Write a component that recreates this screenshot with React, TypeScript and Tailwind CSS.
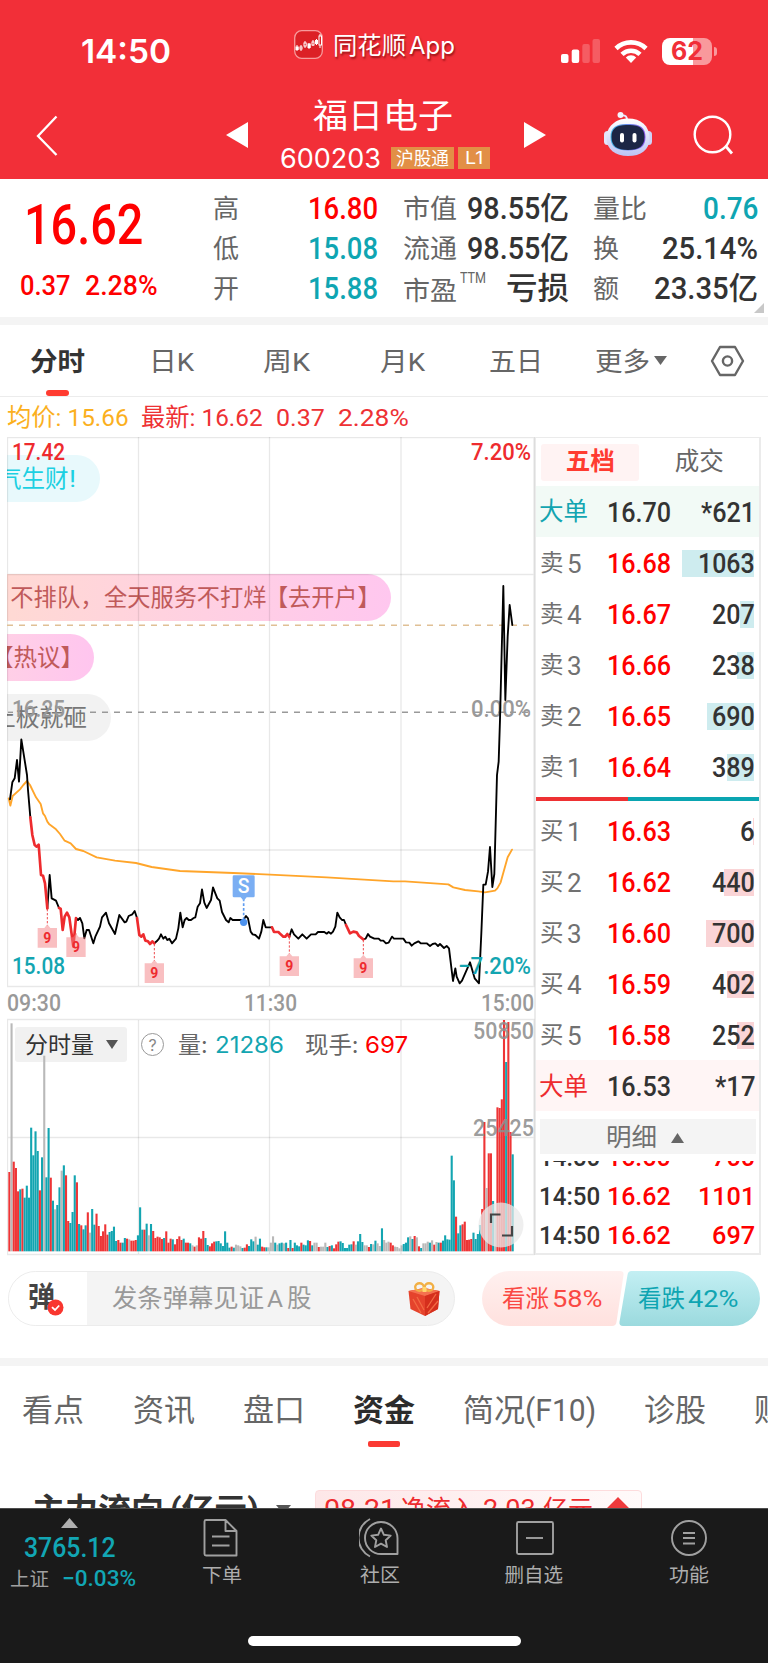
import React, { useLayoutEffect, useRef, useState } from 'react';

type FitProps = { w: number; className?: string; children: React.ReactNode };

/** Text condensed or widened horizontally to an exact advance width. */
function Fit({ w, className = '', children }: FitProps) {
  const ref = useRef<HTMLSpanElement>(null);
  const [scale, setScale] = useState(1);
  useLayoutEffect(() => {
    if (ref.current) setScale(w / ref.current.offsetWidth);
  }, [w, children]);
  return (
    <span className={`block shrink-0 whitespace-pre ${className}`} style={{ width: w }}>
      <span ref={ref} className="inline-block origin-left" style={{ transform: `scaleX(${scale})` }}>
        {children}
      </span>
    </span>
  );
}

const VOLUME =
  'r486 g40 r455 r474 r544 t538 r536 t563 t527 t563 t353 t436 t364 t423 r541 t442 g137 t502 t354 r503 t572 g598 t585 t532 g482 t466 r496 r633 t639 t606 t496 r517 t642 r646 t658 t646 r607 g668 t597 t644 r611 r648 r678 r664 r643 r674 t666 t663 t650 t693 r690 r698 t698 t684 r686 g688 r692 r692 r690 t676 t592 t659 r659 t641 g676 t642 r663 r684 r680 r682 r687 t684 r664 r698 r686 t688 r703 r687 r679 r690 t686 r698 r698 t700 g706 r710 g706 r682 r686 r663 t684 t705 r709 r700 r695 t694 t693 t700 t708 t664 t698 t713 r710 t713 g704 g706 g709 t714 r713 r703 t708 t688 t694 g680 t704 t686 r710 r712 t712 g712 g698 g679 t698 g704 t700 t698 g700 t698 r714 t690 r714 t698 t706 t709 r698 t704 t706 t691 r693 t706 g698 g698 r711 g710 g710 g698 t711 r708 t706 r715 r703 r695 t694 t699 t714 t714 t704 t703 r694 g704 t694 t672 t696 g706 g706 r711 t702 g703 t692 g700 g708 t655 g690 g698 g695 r698 r706 g710 g711 g715 g706 t702 t698 t682 g679 t687 r678 g682 r709 t714 g700 g700 g695 t698 g691 r704 g696 t698 r698 t692 t676 t688 t689 t437 t511 r620 t670 t646 r643 r635 r690 r689 r687 t668 t687 t672 t645 r597 r336 g534 r430 r430 t573 g604 r292 r294 r268 r30 t156 r36 r366 t433';

const BARS = VOLUME.split(' ').map((s) => ({ c: s[0], y: Number(s.slice(1)) }));
const BAR_COLOR: Record<string, string> = { r: '#ee3536', t: '#13a5b1', g: '#b9b9b9' };

const MARKS = [
  { x: 142, top: 624, from: 567 },
  { x: 228, top: 652, from: 640 },
  { x: 463, top: 730, from: 672 },
  { x: 868, top: 709, from: 652 },
  { x: 1090, top: 715, from: 660 },
];

function Chart() {
  const step = 1510 / (BARS.length - 1);
  return (
    <svg className="relative block h-[819px] w-[529px]" viewBox="7 437 529 819" fontFamily="Roboto, 'Noto Sans CJK SC', sans-serif">
      <g stroke="#000" strokeOpacity="0.09" strokeWidth="1.3" fill="none">
        <path d="M7.5 437.5H534V986.5H7.5Z M7.5 574.5H534 M7.5 850H534" />
        <path d="M7.5 1019.5H534V1254.5H7.5Z M7.5 1137.5H534" />
        <path d="M138.5 437V986 M269.5 437V986 M401 437V986 M138.5 1020V1254 M269.5 1020V1254 M401 1020V1254" />
      </g>
      <path d="M7 625.3H533" stroke="#e0c095" strokeWidth="1.4" strokeDasharray="6 6" />
      <path d="M90 712.3H533" stroke="#999" strokeWidth="1.4" strokeDasharray="6 6" />
      <path d="M8 712.3H13" stroke="#999" strokeWidth="1.4" />

      <g fontSize="24" fontWeight="500">
        <text x="12" y="460" textLength="53" lengthAdjust="spacingAndGlyphs" fill="#ee2b2e">17.42</text>
        <text x="471" y="460" textLength="60" lengthAdjust="spacingAndGlyphs" fill="#ee2b2e">7.20%</text>
        <text x="12" y="717" textLength="53" lengthAdjust="spacingAndGlyphs" fill="#999">16.25</text>
        <text x="471" y="717" textLength="60" lengthAdjust="spacingAndGlyphs" fill="#999">0.00%</text>
      </g>

      <g transform="translate(0 720) scale(0.33333)" fill="none" strokeWidth="5.6" strokeLinejoin="round" strokeLinecap="round">
        <polyline stroke="#ffa52a" points="26,235 31,257 38,228 60,208 70,195 81,183 90,195 108,232 122,252 129,280 135,288 142,305 148,313 168,328 180,342 194,362 212,370 228,387 250,393 290,412 345,422 408,429 455,441 540,453 700,459 810,464 980,472 1180,484 1215,484 1345,493 1360,502 1395,510 1435,514 1455,517 1485,512 1492,505 1502,487 1523,412 1536,389" />
        <polyline stroke="#000" points="30,238 37,187 44,175 51,120 57,185 64,58 81,165 84,210 91,292" />
        <polyline stroke="#000" points="142,565 149,465 155,535 168,542 177,564" />
        <polyline stroke="#000" points="228,594 234,600 240,594 247,610 253,655 260,630 267,630 280,670 286,650 300,620 306,592 318,578 327,610 345,642 358,585 374,607 379,605 386,588 397,583 404,573 411,594" />
        <polyline stroke="#000" points="463,670 470,664 477,656 483,643 490,656 496,650 502,660 508,656 516,670 528,656 535,625 541,578 548,622 554,600 560,594 566,600 573,600 581,594 586,592 593,560 600,550 606,508 613,548 620,564 633,540 639,502 646,520 652,535 659,542 666,576 678,600 686,607 691,594 698,600 730,600 738,588 744,595 752,635 758,643 766,645 777,656 784,635 790,600 797,622 816,622" />
        <polyline stroke="#000" points="868,650 875,628 882,643 895,656 907,643 920,656 933,643 947,643 954,636 973,636 980,641 986,636 993,641 999,635 1006,620 1012,578 1019,592 1026,600 1032,600 1038,615" />
        <polyline stroke="#000" points="1090,658 1097,656 1104,642 1110,650 1123,656 1136,656 1142,662 1150,662 1158,670 1166,668 1176,650 1182,656 1210,656 1218,667 1228,668 1235,677 1243,670 1255,664 1262,670 1280,670 1290,678 1298,672 1306,670 1314,678 1320,672 1332,684 1340,678 1347,685 1359,783 1366,745 1370,770 1379,790 1386,782 1410,727 1424,775 1437,790 1444,640 1450,494 1457,494 1464,455 1470,381 1477,501 1483,462 1491,165 1496,125 1500,0 1510,-402 1516,-60 1523,-250 1529,-345 1537,-285" />
        <g stroke="#ee2b2e" strokeWidth="8">
          <polyline points="91,292 97,345 104,375 110,380 116,374 123,465 129,467 135,490 142,565" />
          <polyline points="177,564 182,566 188,630 194,590 201,578 208,592 220,680 228,594" />
          <polyline points="411,594 418,645 424,650 430,643 436,662 444,664 450,672 457,664 463,670" />
          <polyline points="816,622 822,636 835,636 842,643 850,650 856,650 862,642 868,650" />
          <polyline points="1038,615 1050,640 1060,635 1070,637 1077,648 1090,658" />
        </g>
        {MARKS.map((m) => (
          <g key={m.x}>
            <path d={`M${m.x} ${m.from}V${m.top - 8}`} stroke="#ee4a4c" strokeWidth="3" strokeDasharray="7 5" strokeLinecap="butt" />
            <path d={`M${m.x - 9} ${m.top}L${m.x} ${m.top - 11}L${m.x + 9} ${m.top}H${m.x + 29}V${m.top + 59}H${m.x - 29}V${m.top}Z`} fill="#f48083" fillOpacity="0.5" />
            <text x={m.x} y={m.top + 44} textAnchor="middle" fontSize="42" fontWeight="700" fill="#ee2b2e">9</text>
          </g>
        ))}
        <path d="M731 536V600" stroke="#5f9cf0" strokeWidth="5" strokeDasharray="8 6" strokeLinecap="butt" />
        <circle cx="731" cy="607" r="11" fill="#4d92ee" />
        <path d="M698 470q0-4 4-4H760q4 0 4 4V528q0 4-4 4H740L731 542L722 532H702q-4 0-4-4Z" fill="#7aaef3" />
        <text x="731" y="520" textAnchor="middle" fontSize="58" fontWeight="500" fill="#fff">S</text>
      </g>

      <g fontSize="24" fontWeight="500">
        <text x="12" y="973.5" textLength="53" lengthAdjust="spacingAndGlyphs" fill="#13a5b1">15.08</text>
        <text x="458" y="973.5" textLength="73" lengthAdjust="spacingAndGlyphs" fill="#13a5b1">−7.20%</text>
        <g fill="#999">
          <text x="7" y="1010.5" textLength="54" lengthAdjust="spacingAndGlyphs">09:30</text>
          <text x="244" y="1010.5" textLength="53" lengthAdjust="spacingAndGlyphs">11:30</text>
          <text x="481" y="1010.5" textLength="53" lengthAdjust="spacingAndGlyphs">15:00</text>
        </g>
      </g>

      <g transform="translate(0 1010) scale(0.33333)">
        {BARS.map((b, i) => (
          <rect key={i} x={25 + i * step} y={b.y} width={6.3} height={724 - b.y} fill={BAR_COLOR[b.c]} />
        ))}
      </g>
      <g fontSize="24" fontWeight="500" fill="#8f8f8f" fillOpacity="0.9">
        <text x="473" y="1039" textLength="61" lengthAdjust="spacingAndGlyphs">50850</text>
        <text x="473" y="1135.500" textLength="61" lengthAdjust="spacingAndGlyphs">25425</text>
      </g>
      <circle cx="501" cy="1225" r="22.500" fill="#e9e9e9" fillOpacity="0.75" />
      <path d="M491 1223V1214.500H500.500 M512 1226V1235.500H502" fill="none" stroke="#444" strokeWidth="2.200" />
    </svg>
  );
}

function Danmaku() {
  return (
    <div className="absolute inset-0 overflow-hidden text-[23.5px] leading-none text-[#c05a5a]">
      <div className="absolute left-[-40px] top-[17.5px] flex h-[47px] w-[133px] items-center justify-end rounded-full bg-[#e8f9fc] pr-[24px] pt-[3px] text-[#1cd0e2]">
        <Fit w={71}>气生财</Fit>
        <Fit w={7}>!</Fit>
      </div>
      <div className="absolute left-[-60px] top-[137px] flex h-[47px] w-[444px] items-center justify-end rounded-full bg-gradient-to-r from-[#ffdccf] to-[#ffc7ef] pr-[10px] pt-[3px]">
        <Fit w={117}>户不排队，</Fit>
        <Fit w={163}>全天服务不打烊</Fit>
        <Fit w={116} className="ml-[-2px]">【去开户】</Fit>
      </div>
      <div className="absolute left-[-60px] top-[197px] flex h-[47px] w-[147px] items-center justify-end rounded-full bg-gradient-to-r from-[#ffd6e0] to-[#ffc5ef] pr-[10px] pt-[3px]">
        <Fit w={94}>【热议】</Fit>
      </div>
      <div className="absolute left-[-60px] top-[257px] flex h-[47px] w-[164px] items-center justify-end rounded-full bg-[#f2f2f2] pr-[24px] pt-[3px] text-[#777]">
        <Fit w={95}>上板就砸</Fit>
      </div>
    </div>
  );
}

const SELLS = [
  ['5', '16.68', '1063', 72, 57],
  ['4', '16.67', '207', 14, 43],
  ['3', '16.66', '238', 17, 43],
  ['2', '16.65', '690', 47, 43],
  ['1', '16.64', '389', 27, 43],
] as const;
const BUYS = [
  ['1', '16.63', '6', 1, 15],
  ['2', '16.62', '440', 30, 43],
  ['3', '16.60', '700', 48, 43],
  ['4', '16.59', '402', 27, 43],
  ['5', '16.58', '252', 17, 43],
] as const;

type BookRowProps = { side: string; n: string; price: string; vol: string; bar: number; volW: number; barClass: string };

function BookRow({ side, n, price, vol, bar, volW, barClass }: BookRowProps) {
  return (
    <div className="relative flex h-[51.1px] items-center pl-[4px] pr-[4px] pt-[2px] text-[27.5px]">
      <div className={`absolute right-[5px] h-[27px] ${barClass}`} style={{ width: bar }} />
      <Fit w={24} className="text-[23.5px] text-[#717171]">{side}</Fit>
      <Fit w={15} className="ml-[3px] text-[26px] text-[#717171]">{n}</Fit>
      <Fit w={64} className="ml-[25px] font-medium text-[#f00]">{price}</Fit>
      <Fit w={volW} className="relative ml-auto font-medium text-[#333]">{vol}</Fit>
    </div>
  );
}

function BigRow({ price, vol, volW, rowClass, labelClass }: { price: string; vol: string; volW: number; rowClass: string; labelClass: string }) {
  return (
    <div className={`flex h-[51px] items-center pl-[3px] pr-[4px] pt-[2px] text-[27.5px] font-medium text-[#333] ${rowClass}`}>
      <Fit w={49} className={`text-[24.5px] font-normal ${labelClass}`}>大单</Fit>
      <Fit w={64} className="ml-[19px]">{price}</Fit>
      <Fit w={volW} className="ml-auto">{vol}</Fit>
    </div>
  );
}

function Tick({ price, vol, volW, className = '' }: { price: string; vol: string; volW: number; className?: string }) {
  return (
    <div className={`flex h-[39.3px] shrink-0 items-center pl-[3px] pr-[4px] text-[26.5px] font-medium text-[#f00] ${className}`}>
      <Fit w={61} className="text-[#333]">14:50</Fit>
      <Fit w={64} className="ml-[7px]">{price}</Fit>
      <Fit w={volW} className="ml-auto">{vol}</Fit>
    </div>
  );
}

function OrderBook() {
  return (
    <div className="ml-[-2px] h-[818px] w-[227px] border-2 border-t-[1px] border-[#ebebeb]">
      <div className="flex h-[48px] items-center pl-[5px] text-[24.5px]">
        <div className="flex h-[37px] w-[102px] items-center justify-center rounded-[3px] bg-[#fff3f3] pt-[1px] font-bold text-[#ff3b30]">五档</div>
        <div className="flex w-[124px] justify-center pt-[1px] text-[#666]">成交</div>
      </div>
      <BigRow price="16.70" vol="*621" volW={54} rowClass="bg-[#f2faf6]" labelClass="text-[#13a5b1]" />
      {SELLS.map(([n, p, v, b, w]) => (
        <BookRow key={n} side="卖" n={n} price={p} vol={v} bar={b} volW={w} barClass="bg-[#ceecef]" />
      ))}
      <div className="mb-[4px] mt-[4.5px] flex h-[4px]">
        <div className="w-[92px] bg-[#ee3133]" />
        <div className="flex-1 bg-[#0aa5b1]" />
      </div>
      {BUYS.map(([n, p, v, b, w]) => (
        <BookRow key={n} side="买" n={n} price={p} vol={v} bar={b} volW={w} barClass="bg-[#fad4d6]" />
      ))}
      <BigRow price="16.53" vol="*17" volW={40} rowClass="bg-[#fff5f5]" labelClass="text-[#ee2b2e]" />
      <div className="ml-[4px] mr-[3px] mt-[8px] flex h-[35px] items-center bg-[#f4f4f4] pl-[66px] pt-[2px] text-[24.5px] text-[#717171]">
        <Fit w={51}>明细</Fit>
        <svg className="ml-[14px] h-[10px] w-[13px]" viewBox="0 0 13 10"><path d="M6.500 0L13 10H0Z" fill="#666" /></svg>
      </div>
      <div className="mt-[7px] flex h-[90px] flex-col overflow-hidden">
        <Tick price="16.60" vol="700" volW={43} className="mt-[-24px]" />
        <Tick price="16.62" vol="1101" volW={57} />
        <Tick price="16.62" vol="697" volW={43} />
      </div>
    </div>
  );
}

function StatusBar() {
  return (
    <div className="flex h-[92px] items-center pt-[10px] text-white">
      <Fit w={90} className="ml-[81px] pt-[1px] font-['Inter'] text-[33px] font-semibold">14:50</Fit>
      <svg className="mb-[14px] ml-[123px] h-[29px] w-[29px]" viewBox="0 0 29 29">
        <rect x=".7" y=".7" width="27.600" height="27.600" rx="7" fill="#dc2026" stroke="#f79a9c" strokeWidth="1.300" />
        <g stroke="#fff" strokeWidth="1" fill="#fff">
          <path d="M3 15v6M7 15v6M11 11v7M15 13v6M19 10v6M22.500 9v6M26 4v14" />
          <rect x="2" y="17" width="2.200" height="2.500" />
          <rect x="6" y="17" width="2" height="2" fill="#dc2026" />
          <rect x="10" y="13" width="2.200" height="3" fill="#dc2026" />
          <rect x="14" y="14" width="2.200" height="3.500" />
          <rect x="18" y="12" width="2" height="3" fill="#dc2026" />
          <rect x="21.500" y="10.500" width="2" height="3" />
          <rect x="25" y="6" width="2.500" height="9" fill="#dc2026" />
        </g>
      </svg>
      <div className="mb-[11px] ml-[10px] flex text-[24px] [text-shadow:1px_2px_2px_rgba(90,0,0,0.6)]">
        <Fit w={73}>同花顺</Fit>
        <Fit w={46} className="ml-[3px] font-['Inter']">App</Fit>
      </div>
      <svg className="ml-[106px] h-[24px] w-[39px]" viewBox="0 0 39 24" fill="#fff">
        <rect x="0" y="15" width="7.500" height="9" rx="2" />
        <rect x="10.700" y="10.500" width="7.500" height="13.500" rx="2" />
        <rect x="21.300" y="5" width="7.500" height="19" rx="2" fillOpacity=".22" />
        <rect x="31.500" y="0" width="7.500" height="24" rx="2" fillOpacity=".22" />
      </svg>
      <svg className="ml-[14px] h-[24px] w-[34px]" viewBox="0 0 34 24" fill="none" stroke="#fff" strokeWidth="4.600">
        <path d="M2 9.500a21.500 21.500 0 0 1 30 0" />
        <path d="M8 15.400a13 13 0 0 1 18 0" />
        <path d="M17 24l-5.200-5.600a7.400 7.400 0 0 1 10.400 0z" fill="#fff" stroke="none" />
      </svg>
      <div className="ml-[14px] flex h-[27px] w-[50px] items-center justify-center rounded-[8px] bg-[linear-gradient(90deg,#fff_62%,#f9999c_62%)] font-['Inter'] text-[25px] font-bold text-[#f12f38]">
        <Fit w={32}>62</Fit>
      </div>
      <div className="ml-[1.5px] h-[9px] w-[3px] rounded-r-full bg-[#f9999c]" />
    </div>
  );
}

function Robot() {
  return (
    <svg className="h-[46px] w-[50px]" viewBox="0 0 50 46">
      <defs>
        <linearGradient id="shell" x1="0" y1="0" x2="0" y2="1"><stop offset="0" stopColor="#fff" /><stop offset="1" stopColor="#bcc3f4" /></linearGradient>
        <linearGradient id="rim" x1="0" y1="0" x2="1" y2="0"><stop offset="0" stopColor="#45b6e6" /><stop offset="1" stopColor="#8a55e8" /></linearGradient>
      </defs>
      <path d="M18 4.500q7-1 6 6" fill="none" stroke="#e7e9ff" strokeWidth="1.800" />
      <circle cx="17.500" cy="4" r="3" fill="#f4f5ff" />
      <rect x="1" y="20" width="7" height="14" rx="3.500" fill="#e3e5fb" />
      <rect x="42" y="20" width="7" height="14" rx="3.500" fill="#cfd2f8" />
      <path d="M25 7.500C38 7.500 46.500 15 46.500 27S38 45 25 45S3.500 38 3.500 27S12 7.500 25 7.500Z" fill="url(#shell)" />
      <path d="M25 13C36 12.500 42.500 16 42.500 26S36.500 39.500 25 39.500S7.500 36 7.500 26S14 12.500 25 13Z" fill="url(#rim)" />
      <path d="M25 14C35.500 13.500 41.500 17 41.500 26S36 39 25 39S8.500 35 8.500 26S14.500 13.500 25 14Z" fill="#1c2645" />
      <rect x="17" y="22" width="4" height="9.500" rx="2" fill="#fff" />
      <rect x="29.500" y="22" width="4" height="9.500" rx="2" fill="#fff" />
    </svg>
  );
}

function TitleBar() {
  return (
    <div className="flex h-[87px] text-white">
      <svg className="ml-[35px] mt-[23px] h-[42px] w-[24px]" viewBox="0 0 24 42" fill="none" stroke="#fff" strokeWidth="2.300"><path d="M21.500 1.500L3 21L21.500 40" /></svg>
      <svg className="ml-[167px] mt-[30px] h-[26px] w-[22px]" viewBox="0 0 22 26" fill="#fff"><path d="M22 0V26L0 13Z" /></svg>
      <div className="ml-[30px] flex w-[216px] flex-col">
        <Fit w={140} className="ml-[35px] mt-[7px] text-[34px]">福日电子</Fit>
        <div className="mt-[14px] flex h-[22px] items-center">
          <Fit w={101} className="ml-[2px] font-['Inter'] text-[27px]">600203</Fit>
          <div className="ml-[10px] flex h-[22px] w-[63px] items-center justify-center bg-[#e28f46] pt-[1px] text-[18px]">
            <Fit w={53}>沪股通</Fit>
          </div>
          <div className="ml-[4px] flex h-[22px] w-[32px] items-center justify-center bg-[#e28f46] text-[17.5px]">
            <Fit w={18} className="font-['Inter']">L1</Fit>
          </div>
        </div>
      </div>
      <svg className="ml-[30px] mt-[30px] h-[26px] w-[22px]" viewBox="0 0 22 26" fill="#fff"><path d="M0 0V26L22 13Z" /></svg>
      <div className="ml-[57px] mt-[19px]"><Robot /></div>
      <svg className="ml-[40px] mt-[23px] h-[42px] w-[42px]" viewBox="0 0 42 42" fill="none" stroke="#fff" strokeWidth="2.400">
        <circle cx="19.500" cy="19.500" r="17.800" /><path d="M33 31.500L39 38.500" strokeWidth="2.800" />
      </svg>
    </div>
  );
}

function Stat({ label, labelW, value, valueW, color }: { label: string; labelW: number; value: string; valueW: number; color: string }) {
  return (
    <div className="flex h-[40px] items-center justify-between">
      <Fit w={labelW} className="pt-[1px] text-[26px] text-[#666]">{label}</Fit>
      <Fit w={valueW} className={`text-[31px] font-medium ${color}`}>{value}</Fit>
    </div>
  );
}

function Quote() {
  return (
    <div className="relative flex h-[138px] bg-white pt-[9px]">
      <div className="w-[213px] text-[#f00]">
        <Fit w={119} className="ml-[24px] mt-[10px] text-[55px] font-medium">16.62</Fit>
        <div className="mt-[19px] flex text-[28.5px] font-medium">
          <Fit w={51} className="ml-[20px]">0.37</Fit>
          <Fit w={73} className="ml-[14px]">2.28%</Fit>
        </div>
      </div>
      <div className="w-[165px]">
        <Stat label="高" labelW={26} value="16.80" valueW={70} color="text-[#f00]" />
        <Stat label="低" labelW={26} value="15.08" valueW={70} color="text-[#0fa5b2]" />
        <Stat label="开" labelW={26} value="15.88" valueW={70} color="text-[#0fa5b2]" />
      </div>
      <div className="ml-[25px] w-[166px]">
        <Stat label="市值" labelW={54} value="98.55亿" valueW={102} color="text-[#333]" />
        <Stat label="流通" labelW={54} value="98.55亿" valueW={102} color="text-[#333]" />
        <div className="flex h-[40px] items-center text-[#666]">
          <Fit w={54} className="pt-[5px] text-[26px]">市盈</Fit>
          <Fit w={26} className="mb-[21px] ml-[3px] text-[14px]">TTM</Fit>
          <Fit w={63} className="ml-auto text-[31px] font-medium text-[#333]">亏损</Fit>
        </div>
      </div>
      <div className="ml-[24px] w-[165px]">
        <Stat label="量比" labelW={54} value="0.76" valueW={55} color="text-[#0fa5b2]" />
        <Stat label="换" labelW={26} value="25.14%" valueW={96} color="text-[#333]" />
        <Stat label="额" labelW={26} value="23.35亿" valueW={104} color="text-[#333]" />
      </div>
      <svg className="absolute bottom-[4px] right-[4px] h-[10px] w-[10px]" viewBox="0 0 10 10"><path d="M10 0V10H0Z" fill="#c8c8c8" /></svg>
    </div>
  );
}

function PeriodTabs() {
  return (
    <div className="relative flex h-[72px] items-center border-b-[1.5px] border-[#ececec] bg-white pt-[2px] text-[26.5px] text-[#666]">
      <Fit w={55} className="ml-[30px] pt-[1px] font-bold text-[#333]">分时</Fit>
      <Fit w={45} className="ml-[64px] pt-[1px]">日K</Fit>
      <Fit w={47} className="ml-[69px] pt-[1px]">周K</Fit>
      <Fit w={45} className="ml-[70px] pt-[1px]">月K</Fit>
      <Fit w={54} className="ml-[64px] pt-[1px]">五日</Fit>
      <Fit w={55} className="ml-[52px] pt-[1px]">更多</Fit>
      <svg className="ml-[4px] mb-[2px] h-[9px] w-[13px]" viewBox="0 0 13 9"><path d="M0 0H13L6.500 9Z" fill="#666" /></svg>
      <svg className="ml-[43px] mb-[2px] h-[32px] w-[35px]" viewBox="0 0 35 32" fill="none" stroke="#666" strokeWidth="2.400" strokeLinejoin="round">
        <path d="M10 2H25L33 16L25 30H10L2 16Z" /><circle cx="17.500" cy="16" r="4.600" />
      </svg>
      <div className="absolute bottom-0 left-[46px] h-[6px] w-[23px] rounded-[3px] bg-[#ff3b30]" />
    </div>
  );
}

function Gift() {
  return (
    <svg className="h-[34px] w-[32px]" viewBox="0 0 32 34">
      <path d="M0.500 9L16 6L31.500 9L30 27L17 34L2.500 27Z" fill="#e5432c" />
      <path d="M0.500 9L16 6L31.500 9L17 14Z" fill="#f4714f" />
      <path d="M17 14L31.500 9L30 27L17 34Z" fill="#d52f1d" />
      <path d="M5 17L13 31M9 15L16 28M19 26L28 12M20 31L30 19" stroke="#f26a43" strokeWidth="1.300" />
      <g fill="none" stroke="#f2b045" strokeWidth="2.400"><ellipse cx="11.500" cy="5" rx="4.300" ry="3.800" /><ellipse cx="21" cy="5" rx="4.300" ry="3.800" /></g>
      <path d="M14.500 5h4v5h-4z" fill="#ffd66e" />
    </svg>
  );
}

function CommentBar() {
  return (
    <div className="flex h-[55px] items-center pl-[8px]">
      <div className="flex h-[55px] w-[447px] items-center overflow-hidden rounded-full border-[1.5px] border-[#ececec] bg-[#f4f4f4]">
        <div className="relative h-full w-[78px] bg-white">
          <Fit w={27} className="ml-[19px] mt-[12px] text-[28px] font-bold text-[#444]">弹</Fit>
          <svg className="absolute left-[38px] top-[27px] h-[17px] w-[17px]" viewBox="0 0 17 17">
            <circle cx="8.500" cy="8.500" r="8" fill="#f9362f" /><path d="M5 8.200L8 11L12.200 6.500" fill="none" stroke="#fff" strokeWidth="1.800" />
          </svg>
        </div>
        <div className="ml-[25px] flex pt-[2px] text-[24.5px] text-[#999]">
          <Fit w={152}>发条弹幕见证</Fit>
          <Fit w={16} className="ml-[3px]">A</Fit>
          <Fit w={25} className="ml-[4px]">股</Fit>
        </div>
        <div className="ml-auto mr-[14px]"><Gift /></div>
      </div>
      <div className="relative ml-[27px] flex h-[55px] w-[278px] items-center pt-[2px] text-[23.5px]">
        <svg className="absolute inset-0 h-[55px] w-[278px]" viewBox="0 0 278 55">
          <defs>
            <linearGradient id="up" x1="0" y1="0" x2="0" y2="1"><stop offset="0" stopColor="#fff0ef" /><stop offset="1" stopColor="#ffe1de" /></linearGradient>
            <linearGradient id="down" x1="0" y1="0" x2="0" y2="1"><stop offset="0" stopColor="#c3eff3" /><stop offset="1" stopColor="#9bdade" /></linearGradient>
          </defs>
          <path d="M27.500 0H138Q142 0 141.500 4L134.500 51Q134 55 130 55H27.500A27.500 27.500 0 0 1 27.500 0Z" fill="url(#up)" />
          <path d="M250.500 0H149.500Q146 0 145.500 4L137.500 51Q137 55 141 55H250.500A27.500 27.500 0 0 0 250.500 0Z" fill="url(#down)" />
        </svg>
        <Fit w={47} className="relative ml-[20px] text-[#fa4843]">看涨</Fit>
        <Fit w={51} className="relative ml-[3px] text-[#fa4843]">58%</Fit>
        <Fit w={47} className="relative ml-[35px] text-[#0fa5b2]">看跌</Fit>
        <Fit w={51} className="relative ml-[3px] text-[#0fa5b2]">42%</Fit>
      </div>
    </div>
  );
}

function SectionTabs() {
  return (
    <div className="relative flex h-[88px] items-center overflow-hidden pt-[3px] text-[30.5px] text-[#666]">
      <Fit w={62} className="ml-[22px]">看点</Fit>
      <Fit w={62} className="ml-[49px]">资讯</Fit>
      <Fit w={62} className="ml-[48px]">盘口</Fit>
      <Fit w={62} className="ml-[48px] font-bold text-[#2c2c2c]">资金</Fit>
      <Fit w={62} className="ml-[48px]">简况</Fit>
      <Fit w={71}>(F10)</Fit>
      <Fit w={62} className="ml-[48px]">诊股</Fit>
      <Fit w={62} className="ml-[48px]">财务</Fit>
      <div className="absolute bottom-[7px] left-[368px] h-[6px] w-[32px] rounded-[2px] bg-[#fb3a33]" />
    </div>
  );
}

function FlowHeader() {
  return (
    <div className="flex h-[54px] overflow-hidden">
      <Fit w={132} className="ml-[32px] mt-[40px] text-[32px] font-bold text-[#333]">主力流向</Fit>
      <Fit w={89} className="ml-[6px] mt-[40px] text-[31px] font-bold text-[#333]">(亿元)</Fit>
      <svg className="ml-[17px] mt-[51px] h-[9px] w-[15px] shrink-0" viewBox="0 0 15 9"><path d="M0 0H15L7.500 9Z" fill="#555" /></svg>
      <div className="ml-[24px] mt-[36px] flex h-[44px] w-[327px] items-start rounded-[4px] border border-[#fddcdd] bg-gradient-to-r from-[#fde7e8] to-[#fffafa] pt-[6px] text-[25px] text-[#ee2b2e]">
        <Fit w={72} className="ml-[8px]">08-21</Fit>
        <Fit w={75} className="ml-[5px]">净流入</Fit>
        <Fit w={53} className="ml-[7px]">2.03</Fit>
        <Fit w={50} className="ml-[7px]">亿元</Fit>
        <svg className="ml-[14px] h-[22px] w-[22px]" viewBox="0 0 22 22"><path d="M11 0L22 11H16V22H6V11H0Z" fill="#ee3a3c" /></svg>
      </div>
    </div>
  );
}

function NavItem({ label, w, cls, children }: { label: string; w: number; cls: string; children: React.ReactNode }) {
  return (
    <div className={`flex w-[60px] flex-col items-center ${cls}`}>
      <svg className="mt-[9px] h-[40px] w-[42px]" viewBox="0 0 42 40" fill="none" stroke="#a0a0a0" strokeWidth="1.900" strokeLinejoin="round">{children}</svg>
      <Fit w={w} className="mt-[8px] text-[19.5px] text-[#adadad]">{label}</Fit>
    </div>
  );
}

function BottomNav() {
  return (
    <div className="flex h-[155px] flex-col border-t border-[#4d4d4d] bg-[#1a1a1a]">
      <div className="flex h-[127px]">
        <div className="w-[140px]">
          <svg className="ml-[61px] mt-[9px] block h-[10px] w-[17px]" viewBox="0 0 17 10"><path d="M8.500 0L17 10H0Z" fill="#b0b0b0" /></svg>
          <Fit w={92} className="ml-[24px] mt-[7px] text-[27px] font-medium text-[#12a6b4]">3765.12</Fit>
          <div className="mt-[6px] flex items-center">
            <Fit w={39} className="ml-[10px] pt-[2px] text-[19.5px] text-[#a0a0a0]">上证</Fit>
            <Fit w={74} className="ml-[13px] text-[22px] font-medium text-[#12a6b4]">−0.03%</Fit>
          </div>
        </div>
        <NavItem label="下单" w={40} cls="ml-[52px]">
          <path d="M5 2H24.500L35.500 13V37.500H5Q3.500 37.500 3.500 36V3.500Q3.500 2 5 2Z M24.500 2V13H35.500 M11 18.500H28.500 M11 27.500H28.500" />
        </NavItem>
        <NavItem label="社区" w={40} cls="ml-[98px]">
          <path d="M22 4A16 16 0 0 0 22 36H38.500V20A16.500 16.500 0 0 0 22 4Z" />
          <path d="M11 1A21 21 0 0 0 11 38.500" />
          <path d="M22 10.500L24.900 16.800L31.700 17.600L26.700 22.300L28 29L22 25.700L16 29L17.300 22.300L12.300 17.600L19.100 16.800Z" />
        </NavItem>
        <NavItem label="删自选" w={59} cls="ml-[94px]">
          <rect x="4" y="4" width="36" height="32" rx="1.500" /><path d="M13 20H30" />
        </NavItem>
        <NavItem label="功能" w={40} cls="ml-[95px]">
          <circle cx="21" cy="20" r="17" /><path d="M15 15H27M15 20H27M15 25.500H27" />
        </NavItem>
      </div>
      <div className="mx-auto h-[10px] w-[273px] rounded-full bg-white" />
    </div>
  );
}

export default function App() {
  return (
    <div className="h-[1663px] w-[768px] overflow-hidden bg-white font-['Roboto','Noto_Sans_CJK_SC',sans-serif] leading-none">
      <header className="h-[179px] bg-[#f22f38]">
        <StatusBar />
        <TitleBar />
      </header>
      <Quote />
      <div className="h-[8px] bg-[#f4f4f4]" />
      <PeriodTabs />
      <div className="flex h-[40px] items-center pt-[2px] text-[24.5px] text-[#ee3134]">
        <Fit w={122} className="ml-[7px] text-[#fbb01e]">均价: 15.66</Fit>
        <Fit w={122} className="ml-[12px]">最新: 16.62</Fit>
        <Fit w={49} className="ml-[13px]">0.37</Fit>
        <Fit w={71} className="ml-[13px]">2.28%</Fit>
      </div>
      <main className="flex h-[818px] pl-[7px]">
        <div className="relative h-[818px] w-[529px]">
          <Danmaku />
          <div className="absolute left-[8px] top-[590px] flex items-center font-['Inter','Noto_Sans_CJK_SC',sans-serif] text-[23px] text-[#666]">
            <div className="flex h-[35px] w-[112px] items-center rounded-[3px] bg-[#f1f1f1] pl-[10px] text-[#333]">
              <Fit w={69} className="pt-[2px]">分时量</Fit>
              <svg className="ml-[12px] h-[9px] w-[12px]" viewBox="0 0 12 9"><path d="M0 0H12L6 9Z" fill="#555" /></svg>
            </div>
            <div className="ml-[14px] flex h-[23px] w-[23px] items-center justify-center rounded-full border-[1.5px] border-[#999] text-[16px] text-[#888]">?</div>
            <Fit w={30} className="ml-[14px] pt-[1px]">量:</Fit>
            <Fit w={69} className="ml-[7px] pt-[1px] text-[#13a5b1]">21286</Fit>
            <Fit w={54} className="ml-[21px] pt-[1px]">现手:</Fit>
            <Fit w={43} className="ml-[6px] pt-[1px] text-[#f00]">697</Fit>
          </div>
          <Chart />
        </div>
        <OrderBook />
      </main>
      <div className="h-[16px]" />
      <CommentBar />
      <div className="mt-[32px] h-[8px] bg-[#f4f4f4]" />
      <SectionTabs />
      <FlowHeader />
      <BottomNav />
    </div>
  );
}
